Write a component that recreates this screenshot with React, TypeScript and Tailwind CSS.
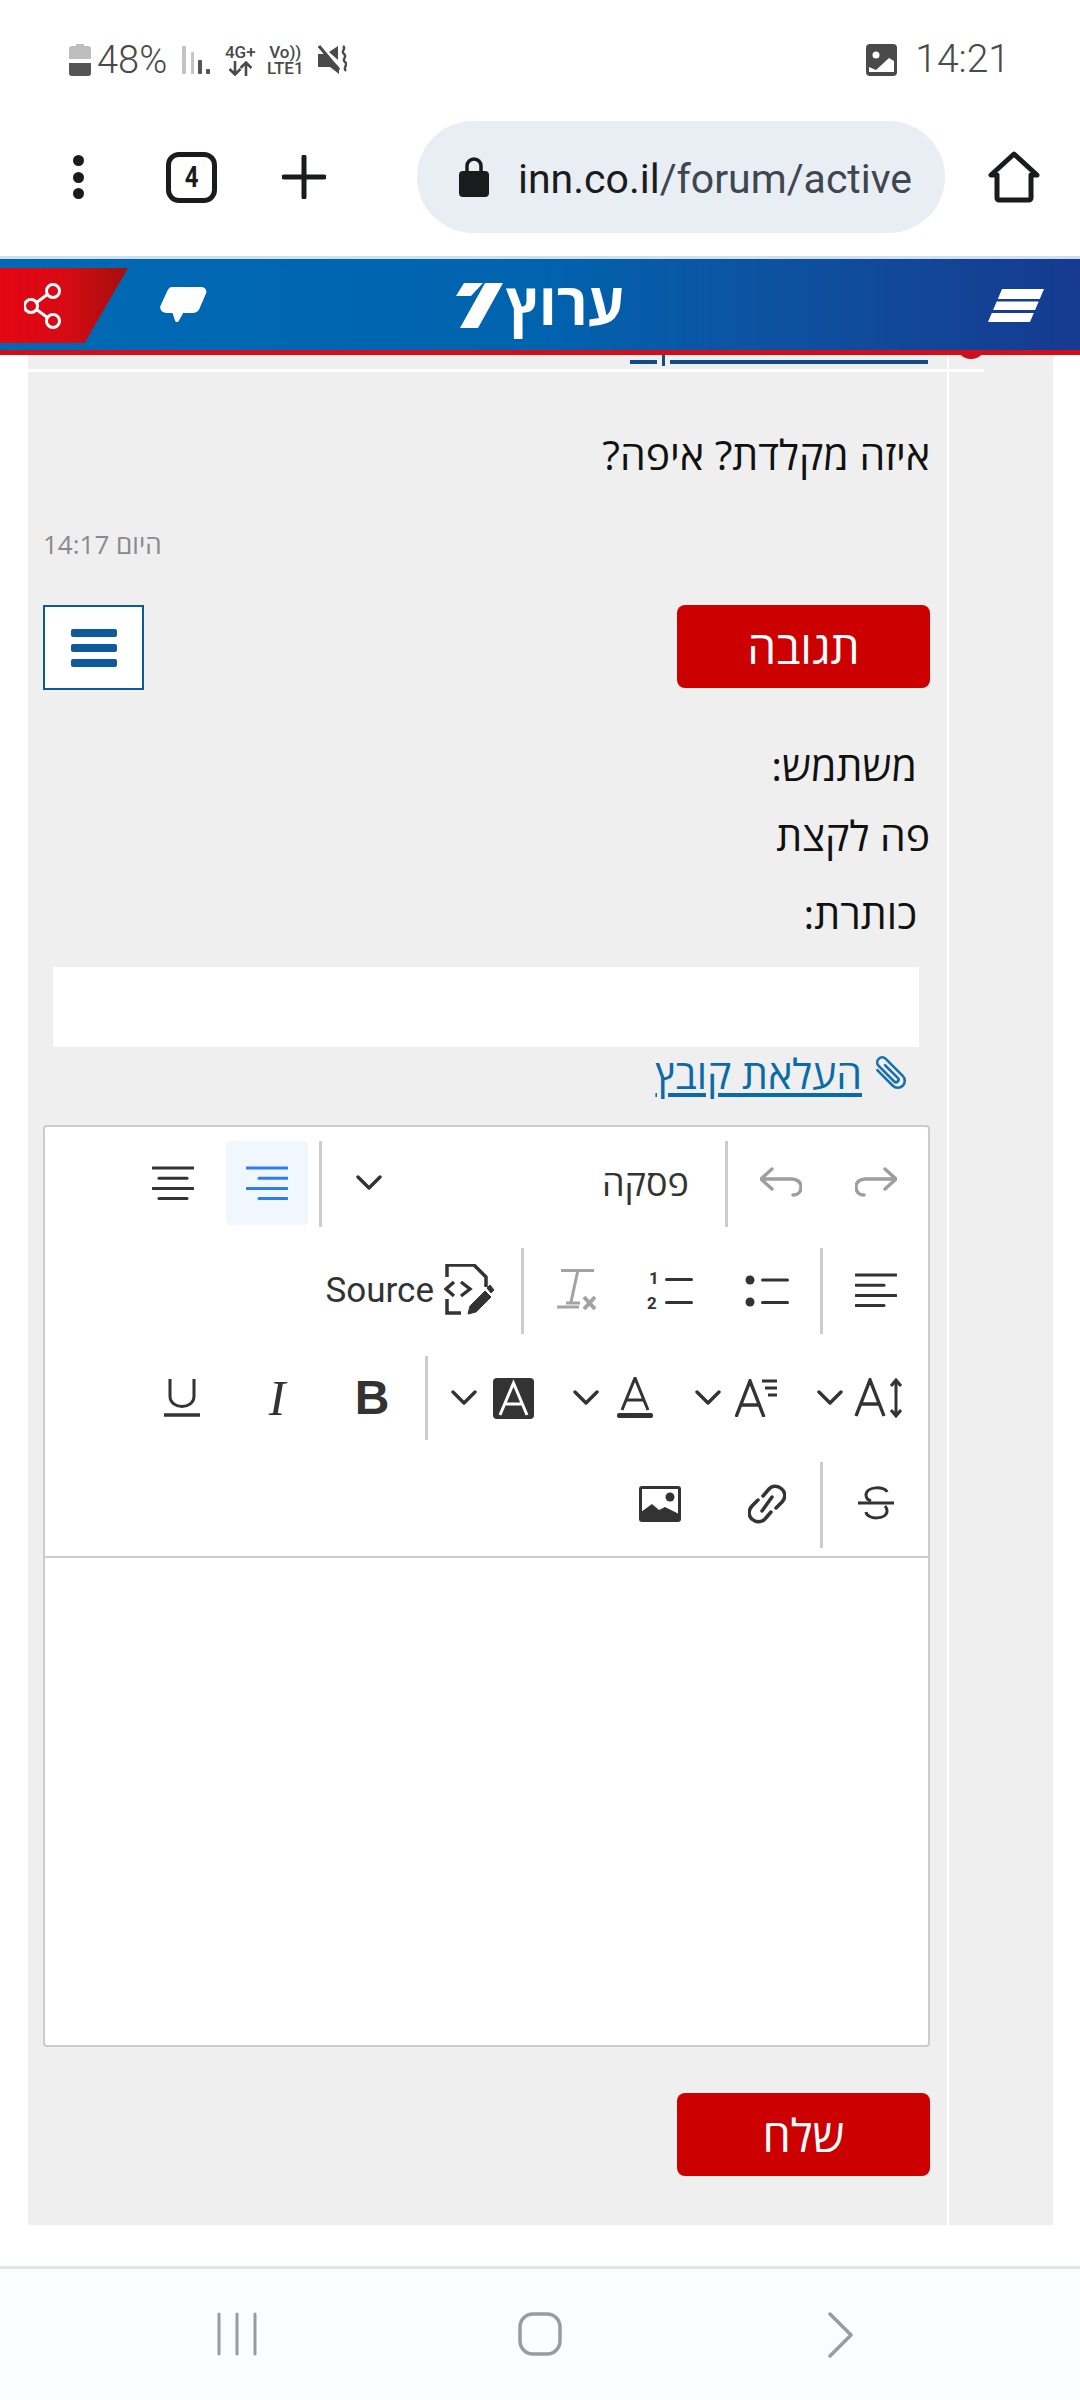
import React from "react";

const ink = "#333333";

const AlignIcon = ({ kind, color = ink }: { kind: "left" | "right" | "center"; color?: string }) => {
  const rows =
    kind === "left"
      ? [[0, 40], [0, 28], [0, 40], [0, 28]]
      : kind === "right"
        ? [[0, 40], [12, 40], [0, 40], [12, 40]]
        : [[0, 40], [6, 34], [0, 40], [6, 34]];
  return (
    <svg width="42" height="36" viewBox="0 0 42 36" fill="none">
      {rows.map(([a, b], i) => (
        <line key={i} x1={a + 1} x2={b + 1} y1={3 + i * 10.2} y2={3 + i * 10.2} stroke={color} strokeWidth="3" strokeLinecap="round" />
      ))}
    </svg>
  );
};

const Chevron = () => (
  <svg width="26" height="18" viewBox="0 0 26 18" fill="none">
    <path d="M2 3l11 11L24 3" stroke={ink} strokeWidth="3.4" strokeLinecap="round" strokeLinejoin="round" />
  </svg>
);

const Sep = () => <div className="w-[3px] h-[86px] bg-[#cccccc] shrink-0" />;

const Btn = ({ children, className = "w-[84px]" }: { children: React.ReactNode; className?: string }) => (
  <div className={`h-[84px] shrink-0 flex items-center justify-center ${className}`}>{children}</div>
);

const Drop = ({ children }: { children: React.ReactNode }) => (
  <div className="w-[111px] h-[84px] shrink-0 flex items-center gap-[11px]">
    <div className="w-[50px] flex justify-center">{children}</div>
    <Chevron />
  </div>
);

const App = () => {
  return (
    <div className="w-[1080px] h-[2400px] bg-white flex flex-col overflow-hidden font-['Roboto',sans-serif]">
      {/* Status bar */}
      <div className="h-[121px] shrink-0 pl-[69px] pr-[70px] pb-[2px] flex items-center justify-between text-[#4a4a4a]">
        <div className="flex items-center">
          <svg width="22" height="32" viewBox="0 0 22 32">
            <path d="M7 0h8v2h4a3 3 0 013 3v10H0V5a3 3 0 013-3h4z" fill="#bdbdbd" />
            <path d="M0 19h22v10a3 3 0 01-3 3H3a3 3 0 01-3-3z" fill="#555555" />
          </svg>
          <span className="ml-[6px] text-[38px] leading-none font-light">48%</span>
          <svg className="ml-[15px]" width="28" height="30" viewBox="0 0 28 30">
            <rect x="0" y="1" width="4" height="28" rx="1" fill="#c4c4c4" />
            <rect x="9" y="7" width="3" height="22" rx="1" fill="#c4c4c4" />
            <rect x="16" y="15" width="4" height="14" rx="1" fill="#555555" />
            <rect x="24" y="24" width="4" height="5" rx="1" fill="#555555" />
          </svg>
          <div className="ml-[13px] w-[34px] flex flex-col items-center font-medium text-[#4a4a4a]">
            <span className="text-[17px] leading-[17px] whitespace-nowrap">4G+</span>
            <svg width="24" height="15" viewBox="0 0 24 15" fill="none" stroke="#4a4a4a" strokeWidth="2.6">
              <path d="M7 0v13M1.500 8l5.500 5.500L12.500 8M18 15V2M12.500 7L18 1.500 23.500 7" />
            </svg>
          </div>
          <div className="ml-[9px] w-[38px] flex flex-col items-center font-medium">
            <span className="text-[17px] leading-[17px] whitespace-nowrap">Vo))</span>
            <span className="text-[17px] leading-[15px] whitespace-nowrap">LTE1</span>
          </div>
          <svg className="ml-[14px]" width="29" height="30" viewBox="0 0 29 30">
            <path d="M0 9h7l14 13v7l-9-7H0z" fill="#4a4a4a" />
            <path d="M11 7l9-6v14z" fill="#4a4a4a" />
            <path d="M1 1l20 24" stroke="#4a4a4a" strokeWidth="3" />
            <path d="M25 1c4 3-3 5 1 8s-3 5 1 8-3 5 1 9" stroke="#4a4a4a" strokeWidth="2.4" fill="none" />
          </svg>
        </div>
        <div className="flex items-center">
          <svg width="31" height="32" viewBox="0 0 31 32">
            <rect width="31" height="32" rx="4" fill="#4a4a4a" />
            <circle cx="10" cy="11" r="3.500" fill="#fff" />
            <path d="M3 28v-5l7 3 13-12 5 3v11z" fill="#fff" />
          </svg>
          <span className="ml-[18px] text-[39px] leading-none font-light">14:21</span>
        </div>
      </div>

      {/* Browser toolbar */}
      <div className="h-[135px] shrink-0 flex items-start text-[#1a1b1d]">
        <div className="w-[417px] h-[112px] shrink-0 flex items-center pl-[73px]">
          <div className="flex flex-col gap-[5.500px]">
            <div className="w-[11px] h-[11px] rounded-full bg-[#1a1b1d]" />
            <div className="w-[11px] h-[11px] rounded-full bg-[#1a1b1d]" />
            <div className="w-[11px] h-[11px] rounded-full bg-[#1a1b1d]" />
          </div>
          <div className="ml-[82px] w-[51px] h-[51px] rounded-[13px] border-[5px] border-[#1a1b1d] flex items-center justify-center font-bold text-[30px] leading-none">
            <span className="scale-x-80">4</span>
          </div>
          <svg className="ml-[65px]" width="44" height="44" viewBox="0 0 44 44">
            <path d="M22 2v40M2 22h40" stroke="#1a1b1d" strokeWidth="5" strokeLinecap="round" />
          </svg>
        </div>
        <div className="w-[528px] h-[112px] shrink-0 bg-[#e8eef4] rounded-full flex items-center pl-[42px]">
          <svg width="30" height="40" viewBox="0 0 30 40">
            <path d="M8 16V9a7 7 0 0114 0v7" fill="none" stroke="#1a1b1d" strokeWidth="3.500" />
            <rect x="0" y="14" width="30" height="26" rx="4" fill="#1a1b1d" />
          </svg>
          <span className="ml-[29px] mt-[5px] text-[41px] leading-none whitespace-nowrap text-[#3e4650]">
            <span className="text-[#1a1b1d]">inn.co.il</span>/forum/active
          </span>
        </div>
        <div className="h-[112px] pl-[43px] flex items-center">
          <svg width="52" height="52" viewBox="0 0 52 52" fill="none">
            <path d="M11 49h30a2 2 0 002-2V24h6L26 3 3 24h6v23a2 2 0 002 2z" stroke="#1a1b1d" strokeWidth="5" strokeLinejoin="round" />
          </svg>
        </div>
      </div>

      {/* Site header */}
      <div className="h-[99px] shrink-0 border-t-[3px] border-t-[#cfe0ec] border-b-[5px] border-b-[#d40d1a] bg-gradient-to-r from-[#006ab5] via-[#0063ae] to-[#153a8f] relative flex items-center justify-center">
        <div className="absolute left-0 top-[9px] w-[128px] h-[75px] bg-gradient-to-r from-[#e30613] via-[#d80a14] to-[#a40e0e] [clip-path:polygon(0_0,100%_0,66%_100%,0_100%)] flex items-center pl-[24px]">
          <svg width="38" height="46" viewBox="0 0 38 46" fill="none" stroke="#fff" strokeWidth="3">
            <circle cx="29" cy="8" r="6.500" />
            <circle cx="7" cy="23" r="6.500" />
            <circle cx="29" cy="38" r="6.500" />
            <path d="M12.500 19.500L24 11M12.500 26.500L24 35" />
          </svg>
        </div>
        <svg className="absolute left-[159px] top-[27px]" width="48" height="39" viewBox="0 0 48 39">
          <path d="M13 3h29c3 0 4 2 3 4l-6 14c-1 3-3 4-6 4h-10l-5 9-3-9H8c-4 0-6-3-4-6l6-13c1-2 2-3 3-3z" fill="#fff" stroke="#fff" strokeWidth="4" strokeLinejoin="round" />
        </svg>
        <div className="flex items-center mt-[2px]">
          <svg width="47" height="45" viewBox="0 0 47 45">
            <path d="M8 0h19L15 13H0zM29 0h18L22 45H4z" fill="#fff" />
          </svg>
          <span dir="rtl" className="ml-[3px] -mt-[6px] text-[58px] leading-none font-bold text-white font-['Open_Sans','Liberation_Sans',sans-serif]">
            ערוץ
          </span>
        </div>
        <svg className="absolute left-[988px] top-[30px]" width="56" height="33" viewBox="0 0 56 33">
          <path d="M14 0h42l-4.200 10H9.800zM8.700 12.500h42L47.100 21h-42zM3.800 24h42L42 33H0z" fill="#fff" />
        </svg>
      </div>

      {/* Forum content */}
      <div className="flex-1 flex pl-[28px] pr-[27px] mb-[41px]">
        <div className="w-[919px] bg-[#efefef] flex flex-col" dir="rtl">
          <div className="h-[14px] shrink-0 overflow-hidden flex items-start pr-[19px]">
            <div className="w-[258px] h-[4px] mt-[5px] bg-[#0f4c8a]" />
            <div className="w-[3px] h-[11px] mr-[5px] bg-[#0f4c8a]" />
            <div className="w-[27px] h-[4px] mt-[5px] mr-[5px] bg-[#0f4c8a]" />
          </div>
          <div className="h-[3px] bg-white shrink-0" />
          <div className="font-['Open_Sans','Liberation_Sans',sans-serif] flex flex-col flex-1 pl-[15px] pr-[17px]">
            <p className="mt-[60px] text-[41px] leading-[44px] text-[#111111]">איזה מקלדת? איפה?</p>
            <p dir="ltr" className="mt-[53px] text-left text-[26px] leading-[30px] text-[#8a8a8a]">14:17 היום</p>
            <div className="mt-[46px] flex items-start justify-between">
              <div className="w-[253px] h-[83px] rounded-[8px] bg-[#cc0000] text-white text-[46px] flex items-center justify-center">תגובה</div>
              <div className="w-[101px] h-[85px] bg-white border-2 border-[#0f5a9a] flex flex-col items-center justify-center gap-[7px]">
                <div className="w-[46px] h-[8px] rounded-[2px] bg-[#0f5a9a]" />
                <div className="w-[46px] h-[8px] rounded-[2px] bg-[#0f5a9a]" />
                <div className="w-[46px] h-[8px] rounded-[2px] bg-[#0f5a9a]" />
              </div>
            </div>
            <p className="mt-[53px] pr-[13px] text-[41px] leading-[44px] text-[#111111]">משתמש:</p>
            <p className="mt-[26px] text-[41px] leading-[44px] text-[#111111]">פה לקצת</p>
            <p className="mt-[34px] pr-[13px] text-[41px] leading-[44px] text-[#111111]">כותרת:</p>
            <div className="mt-[32px] ml-[10px] mr-[11px] h-[80px] bg-white shrink-0" />
            <div className="mt-[4px] pr-[22px] flex items-center gap-[10px] h-[44px]">
              <svg width="36" height="36" viewBox="0 0 36 36" fill="none" stroke="#1a6fb0" strokeWidth="2.600" strokeLinecap="round">
                <path transform="translate(18 18) rotate(-45) translate(-10 -21)" d="M3 10v22a7 7 0 0014 0V8a5 5 0 00-10 0v22a2.500 2.500 0 005 0V12" />
              </svg>
              <span className="text-[41px] leading-[44px] text-[#0b6aa8] underline underline-offset-[4px] whitespace-nowrap">העלאת קובץ</span>
            </div>

            {/* Rich text editor */}
            <div className="mt-[30px] h-[922px] bg-white border-2 border-[#cccccc] rounded-[4px] flex flex-col shrink-0 font-['Liberation_Sans',sans-serif]">
              <div className="h-[431px] shrink-0 border-b-[2px] border-[#cccccc] flex flex-col pt-[14px] pr-[10px]">
                <div className="h-[107px] shrink-0 flex items-start gap-[11px]">
                  <Btn>
                    <svg width="42" height="32" viewBox="0 0 42 32" fill="none" stroke="#9e9e9e" strokeWidth="3.400" strokeLinecap="round" strokeLinejoin="round">
                      <path d="M9 28C3 28 1 24 1 20c0-5 4-8 9-8h30M30 2l11 10-11 10" />
                    </svg>
                  </Btn>
                  <Btn>
                    <svg width="42" height="32" viewBox="0 0 42 32" fill="none" stroke="#9e9e9e" strokeWidth="3.400" strokeLinecap="round" strokeLinejoin="round">
                      <path d="M33 28c6 0 8-4 8-8 0-5-4-8-9-8H2M12 2L1 12l11 10" />
                    </svg>
                  </Btn>
                  <Sep />
                  <div className="w-[371px] h-[84px] shrink-0 mr-[10px] flex items-center justify-between pr-[15px] pl-[23px]">
                    <span className="text-[36px] text-[#333333] font-['Open_Sans','Liberation_Sans',sans-serif]">פסקה</span>
                    <Chevron />
                  </div>
                  <Sep />
                  <div className="w-[82px] h-[84px] shrink-0 rounded-[4px] bg-[#f0f7ff] flex items-center justify-center">
                    <AlignIcon kind="right" color="#2f7cf0" />
                  </div>
                  <Btn>
                    <AlignIcon kind="center" />
                  </Btn>
                </div>
                <div className="h-[108px] shrink-0 flex items-start gap-[11px]">
                  <Btn>
                    <AlignIcon kind="left" />
                  </Btn>
                  <Sep />
                  <Btn>
                    <svg width="44" height="34" viewBox="0 0 44 34" fill="#333333">
                      <circle cx="5" cy="7" r="4.500" />
                      <circle cx="5" cy="29" r="4.500" />
                      <rect x="16" y="5.500" width="28" height="3" rx="1.500" />
                      <rect x="16" y="28" width="28" height="3" rx="1.500" />
                    </svg>
                  </Btn>
                  <Btn>
                    <svg dir="ltr" className="mr-[6px]" width="48" height="48" viewBox="0 0 48 48" fill="#333333">
                      <text x="4" y="18" fontSize="17" fontWeight="700" fontFamily="Roboto" direction="ltr">1</text>
                      <text x="2" y="43" fontSize="17" fontWeight="700" fontFamily="Roboto" direction="ltr">2</text>
                      <rect x="20" y="12" width="28" height="3" rx="1.500" />
                      <rect x="20" y="35" width="28" height="3" rx="1.500" />
                    </svg>
                  </Btn>
                  <Btn className="w-[84px]">
                    <svg width="42" height="42" viewBox="0 0 42 42" fill="none" stroke="#a3a3a3">
                      <path d="M5 1.500h33" strokeWidth="3" />
                      <path d="M22 1l-7 32M10 34h14M1 38h22" strokeWidth="3" />
                      <path d="M28 28l11 12M39 28L28 40" strokeWidth="4" />
                    </svg>
                  </Btn>
                  <Sep />
                  <div className="w-[203px] h-[84px] shrink-0 flex items-center justify-start gap-[10px] pr-[16px]">
                    <svg width="50" height="52" viewBox="0 0 50 52" fill="none" stroke="#333333">
                      <path d="M3 13V1h27l12 12v10M3 35v14h14" strokeWidth="3.500" />
                      <path d="M10 18l-8 7 8 7M17 18l9 7-9 7" strokeWidth="3.400" />
                      <path d="M24 50l2-8 15-15 6 6-15 15zM43 24l3-3 4 5-3 3z" fill="#333333" strokeWidth="1" />
                    </svg>
                    <span className="text-[35px] leading-none text-[#333333] font-['Roboto',sans-serif]" dir="ltr">Source</span>
                  </div>
                </div>
                <div className="h-[106px] shrink-0 flex items-start gap-[11px] pr-[14px]">
                  <Drop>
                    <svg width="50" height="40" viewBox="0 0 50 40" fill="none" stroke="#333333" strokeWidth="3.400">
                      <path d="M1 38L15 2l14 36M6 26h19" transform="translate(1 0)" />
                      <path d="M42 3v34M37 8l5-6 5 6M37 32l5 6 5-6" strokeWidth="3" />
                    </svg>
                  </Drop>
                  <Drop>
                    <svg width="44" height="38" viewBox="0 0 44 38" fill="none" stroke="#333333" strokeWidth="3.400">
                      <path d="M1 38L15 2l14 36M6 26h19" />
                      <path d="M27 2h15M30 9h12M33 16h9" strokeWidth="3" />
                    </svg>
                  </Drop>
                  <Drop>
                    <svg width="36" height="42" viewBox="0 0 36 42" fill="none" stroke="#333333" strokeWidth="3">
                      <path d="M5 33L18 1l13 32M9 23h18" />
                      <rect x="0" y="36" width="36" height="5" rx="2" fill="#333333" stroke="none" />
                    </svg>
                  </Drop>
                  <Drop>
                    <svg width="41" height="41" viewBox="0 0 41 41">
                      <rect width="41" height="41" rx="4" fill="#333333" />
                      <path d="M7 37L20.500 5 34 37M11.500 26h18" fill="none" stroke="#fff" strokeWidth="3" />
                    </svg>
                  </Drop>
                  <div className="w-[3px] h-[84px] bg-[#cccccc] shrink-0 -mr-[12px]" />
                  <Btn>
                    <span className="text-[48px] font-bold text-[#333333] leading-none" dir="ltr">B</span>
                  </Btn>
                  <Btn>
                    <span className="text-[50px] italic text-[#333333] leading-none font-['Liberation_Serif',serif]" dir="ltr">I</span>
                  </Btn>
                  <Btn>
                    <svg width="36" height="40" viewBox="0 0 36 40" fill="none" stroke="#333333">
                      <path d="M6 1v17c0 14 24 14 24 0V1" strokeWidth="3" />
                      <path d="M0 37h36" strokeWidth="3.500" />
                    </svg>
                  </Btn>
                </div>
                <div className="h-[84px] shrink-0 flex items-start gap-[11px]">
                  <Btn>
                    <svg width="36" height="36" viewBox="0 0 36 36" fill="none" stroke="#333333" strokeWidth="3">
                      <path d="M0 17h36" />
                      <path d="M29 6c-2-6-21-6-21 3 0 3 2 5 5 6M8 26c1 8 21 8 21-1 0-2-1-4-2-5" />
                    </svg>
                  </Btn>
                  <Sep />
                  <Btn>
                    <svg width="38" height="42" viewBox="0 0 38 42" fill="none" stroke="#333333" strokeWidth="3.500" strokeLinecap="round">
                      <path d="M15 13l6-7c7-8 22 3 13 13l-6 6M23 29l-6 7c-8 8-22-3-13-13l6-6M14 28l10-14" />
                    </svg>
                  </Btn>
                  <div className="w-[42px] h-[84px] flex items-center justify-center mr-[33px]">
                    <svg width="42" height="36" viewBox="0 0 42 36" className="shrink-0">
                      <rect x="1.500" y="1.500" width="39" height="33" rx="1.500" fill="none" stroke="#333333" strokeWidth="3" />
                      <path d="M2 34v-8l11-8 7 6 6-3 14 7v6z" fill="#333333" />
                      <circle cx="31" cy="11" r="4.500" fill="#333333" />
                    </svg>
                  </div>
                </div>
              </div>
              <div className="flex-1" />
            </div>

            <div className="mt-[46px] w-[253px] h-[83px] rounded-[8px] bg-[#cc0000] text-white text-[45px] flex items-center justify-center shrink-0">שלח</div>
          </div>
        </div>
        <div className="w-[2px] bg-white shrink-0" />
        <div className="w-[104px] bg-[#efefef] shrink-0 flex flex-col items-start">
          <div className="h-[14px] w-full overflow-hidden relative">
            <div className="absolute left-[7px] -top-[26px] w-[30px] h-[30px] rounded-full bg-[#c8101a]" />
          </div>
          <div className="h-[3px] w-[35px] bg-white" />
        </div>
      </div>

      {/* Android nav bar */}
      <div className="h-[134px] shrink-0 border-t-[3px] border-[#e0e4e8] bg-[#fbfcfe] flex items-start pt-[43px] pl-[217px]">
        <svg width="42" height="44" viewBox="0 0 42 44" stroke="#9b9b9b" strokeWidth="3" strokeLinecap="round">
          <path d="M2 2v40M20 2v40M38 2v40" />
        </svg>
        <svg className="ml-[259px]" width="44" height="44" viewBox="0 0 44 44" fill="none" stroke="#9b9b9b" strokeWidth="3.500">
          <rect x="2" y="2" width="40" height="40" rx="13" />
        </svg>
        <svg className="ml-[266px]" width="26" height="46" viewBox="0 0 26 46" fill="none" stroke="#9b9b9b" strokeWidth="3.500" strokeLinecap="round" strokeLinejoin="round">
          <path d="M2 2l21 21L2 44" />
        </svg>
      </div>
    </div>
  );
};

export default App;
